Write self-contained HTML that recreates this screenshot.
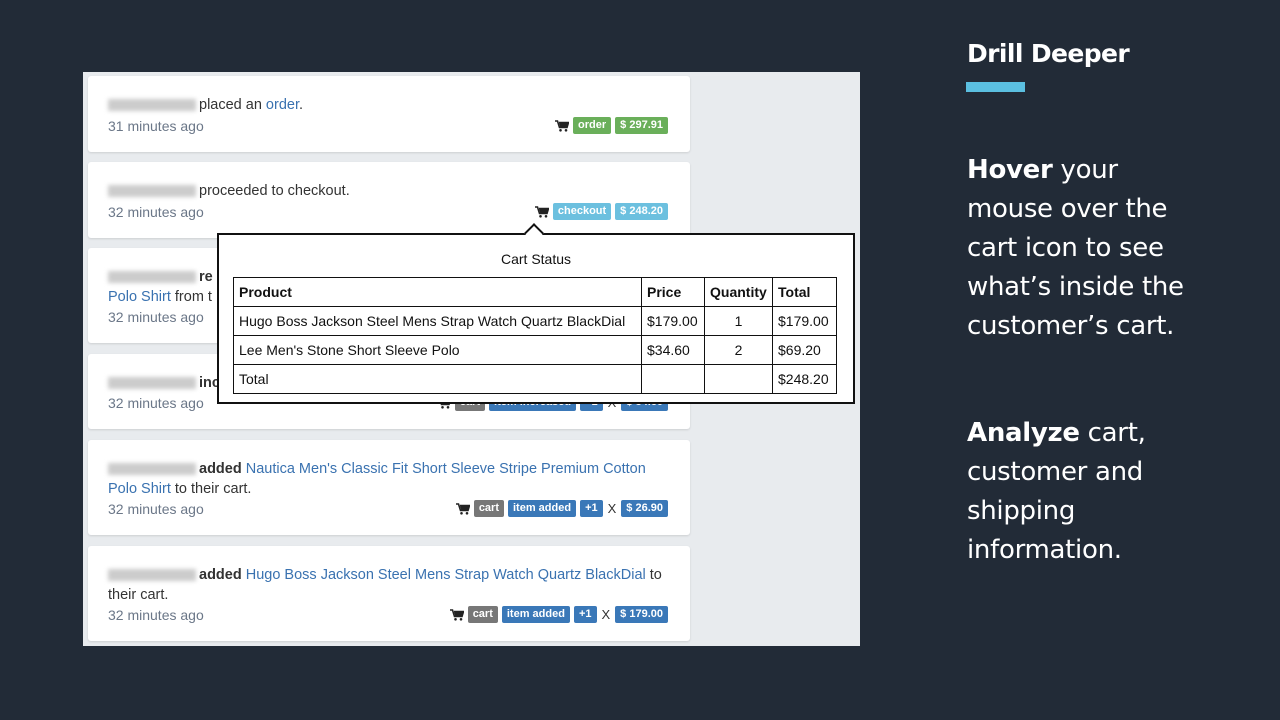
<!DOCTYPE html>
<html><head><style>
body{margin:0;width:1280px;height:720px;background:#222b37;position:relative;overflow:hidden;font-family:"Liberation Sans",sans-serif}
.panel{position:absolute;left:83px;top:72px;width:777px;height:574px;background:#e8ebee;overflow:hidden}
.card{position:absolute;left:5px;width:602px;background:#fff;border-radius:3px;box-shadow:0 1px 2px rgba(0,0,0,.12);font-size:14.5px;color:#333}
.l1{position:absolute;left:20px;top:19px;line-height:20px;width:560px}
.time{position:absolute;left:20px;bottom:18px;color:#6b7788;font-size:14px}
.blur{display:inline-block;width:88px;height:12px;background:#ccc;filter:blur(2px);vertical-align:middle;margin-right:3px}
a{color:#3a72b0;text-decoration:none}
.badges{position:absolute;right:22px;bottom:18px;display:flex;align-items:center;gap:4px;font-size:11px;font-weight:bold;color:#fff}
.b{padding:2px 5px;border-radius:2px;line-height:13px}
.g{background:#6aaf5a}.c{background:#6cc0df}.gr{background:#777}.bl{background:#3a78b8}
.x{color:#333;font-size:13px;font-weight:normal;margin:0 1px}
.pop{position:absolute;left:217px;top:233px;width:634px;height:167px;border:2px solid #111;background:#fff;font-size:14px;color:#111}
table{position:absolute;left:14px;top:42px;border-collapse:collapse}
td{border:1px solid #111;height:28px;padding:0 5px}
.r{color:#fff;position:absolute;left:967px;font-size:26px;line-height:39px;font-family:"DejaVu Sans",sans-serif;letter-spacing:-0.3px}
</style></head><body>
<svg width="0" height="0" style="position:absolute"><defs><symbol id="cart" viewBox="0 0 14 12"><path d="M0 1h2.5l2 6.5h7.5l1.5-5H4" fill="none" stroke="#222" stroke-width="1.6"/><path d="M4 3h9l-1.3 4.3H5.2z" fill="#222"/><circle cx="5.5" cy="10.3" r="1.3" fill="#222"/><circle cx="11" cy="10.3" r="1.3" fill="#222"/></symbol></defs></svg>
<div class="panel">
 <div class="card" style="top:4px;height:76px"><div class="l1"><span class="blur"></span>placed an <a>order</a>.</div><div class="time">31 minutes ago</div>
  <div class="badges"><svg width="14" height="12"><use href="#cart"/></svg><span class="b g">order</span><span class="b g">$ 297.91</span></div></div>
 <div class="card" style="top:90px;height:76px"><div class="l1"><span class="blur"></span>proceeded to checkout.</div><div class="time">32 minutes ago</div>
  <div class="badges"><svg width="14" height="12"><use href="#cart"/></svg><span class="b c">checkout</span><span class="b c">$ 248.20</span></div></div>
 <div class="card" style="top:176px;height:95px"><div class="l1"><span class="blur"></span><b>re</b><br><a>Polo Shirt</a> from t</div><div class="time">32 minutes ago</div></div>
 <div class="card" style="top:282px;height:75px"><div class="l1"><span class="blur"></span><b>inc</b></div><div class="time">32 minutes ago</div>
  <div class="badges"><svg width="14" height="12"><use href="#cart"/></svg><span class="b gr">cart</span><span class="b bl">item increased</span><span class="b bl">+1</span><span class="x">X</span><span class="b bl">$ 34.60</span></div></div>
 <div class="card" style="top:368px;height:95px"><div class="l1"><span class="blur"></span><b>added</b> <a>Nautica Men's Classic Fit Short Sleeve Stripe Premium Cotton<br>Polo Shirt</a> to their cart.</div><div class="time">32 minutes ago</div>
  <div class="badges"><svg width="14" height="12"><use href="#cart"/></svg><span class="b gr">cart</span><span class="b bl">item added</span><span class="b bl">+1</span><span class="x">X</span><span class="b bl">$ 26.90</span></div></div>
 <div class="card" style="top:474px;height:95px"><div class="l1"><span class="blur"></span><b>added</b> <a>Hugo Boss Jackson Steel Mens Strap Watch Quartz BlackDial</a> to<br>their cart.</div><div class="time">32 minutes ago</div>
  <div class="badges"><svg width="14" height="12"><use href="#cart"/></svg><span class="b gr">cart</span><span class="b bl">item added</span><span class="b bl">+1</span><span class="x">X</span><span class="b bl">$ 179.00</span></div></div>
</div>
<div class="pop">
 <div style="position:absolute;left:308px;top:-9px;width:12px;height:12px;background:#fff;border-left:2px solid #111;border-top:2px solid #111;transform:rotate(45deg)"></div>
 <div style="text-align:center;margin-top:16px">Cart Status</div>
 <table>
  <tr><td style="width:397px"><b>Product</b></td><td style="width:52px"><b>Price</b></td><td style="width:57px"><b>Quantity</b></td><td style="width:53px"><b>Total</b></td></tr>
  <tr><td>Hugo Boss Jackson Steel Mens Strap Watch Quartz BlackDial</td><td>$179.00</td><td style="text-align:center">1</td><td>$179.00</td></tr>
  <tr><td>Lee Men's Stone Short Sleeve Polo</td><td>$34.60</td><td style="text-align:center">2</td><td>$69.20</td></tr>
  <tr><td>Total</td><td></td><td></td><td>$248.20</td></tr>
 </table>
</div>
<div class="r" style="top:34px;font-weight:bold;font-size:25px;letter-spacing:-0.6px">Drill Deeper</div>
<div style="position:absolute;left:966px;top:82px;width:59px;height:10px;background:#5bbfe0"></div>
<div class="r" style="top:151px"><b>Hover</b> your<br>mouse over the<br>cart icon to see<br>what’s inside the<br>customer’s cart.</div>
<div class="r" style="top:414px"><b>Analyze</b> cart,<br>customer and<br>shipping<br>information.</div>
</body></html>
